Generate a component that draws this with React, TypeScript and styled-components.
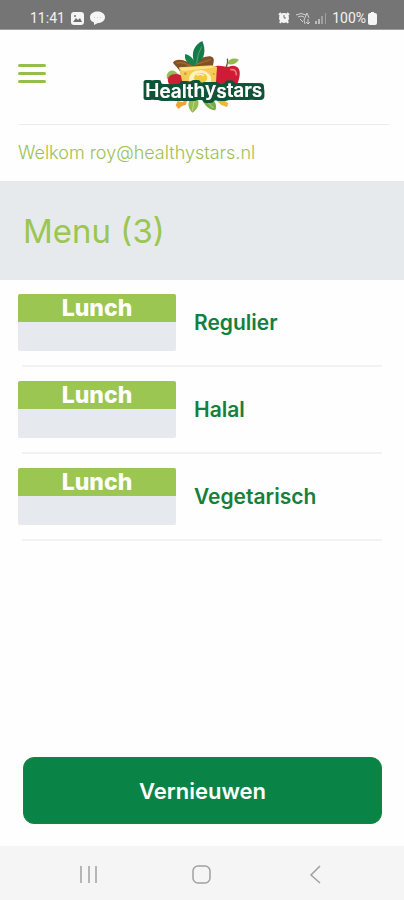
import React from "react";
import styled, { createGlobalStyle } from "styled-components";

const GlobalStyle = createGlobalStyle`
  * { box-sizing: border-box; }
  body {
    margin: 0;
    background: #fefefe;
    font-family: Inter, "Liberation Sans", sans-serif;
  }
  h1, p, ul { margin: 0; padding: 0; }
`;

const Screen = styled.div`
  display: flex;
  flex-direction: column;
  min-height: 100vh;
`;

const StatusBar = styled.div`
  display: flex;
  justify-content: space-between;
  align-items: center;
  height: 30px;
  padding: 7px 27px 0 30px;
  background: #757575;
  border-bottom: 1px solid #9c9c9c;
  color: #f2f2f2;
  font: 400 14px/20px Roboto, sans-serif;
`;

const StatusGroup = styled.div<{ $gap: number }>`
  display: flex;
  align-items: center;
  gap: ${(p) => p.$gap}px;
`;

const Battery = styled.span`
  display: flex;
  align-items: center;
  gap: 2px;
`;

const Header = styled.header`
  display: grid;
  grid-template-columns: 28px 1fr 28px;
  align-items: center;
  height: 95px;
  margin: 0 14px 0 18px;
  border-bottom: 1px solid #ececec;
`;

const MenuButton = styled.button`
  display: flex;
  flex-direction: column;
  gap: 5px;
  padding: 0;
  margin-bottom: 8px;
  border: 0;
  background: none;
`;

const Bar = styled.span`
  height: 3px;
  width: 28px;
  border-radius: 2px;
  background: #94be4c;
`;

const Logo = styled.svg`
  justify-self: center;
  display: block;
`;

const Welcome = styled.p`
  padding: 16px 18px;
  color: #9dc154;
  font-size: 18px;
  font-weight: 300;
  line-height: 24px;
`;

const Banner = styled.h1`
  padding: 30px 23px 29px;
  background: #e6eaed;
  color: #9bc651;
  font-size: 33px;
  font-weight: 400;
  line-height: 40px;
`;

const List = styled.ul`
  flex: 1;
  list-style: none;
`;

const Row = styled.li`
  display: flex;
  align-items: center;
  gap: 18px;
  padding: 14px 22px 16px 18px;
  background: linear-gradient(#f1f2f3, #f1f2f3) 22px 100% / calc(100% - 44px) 2px no-repeat;
`;

const Tile = styled.div`
  width: 158px;
  height: 57px;
  flex: none;
  border-radius: 2px;
  overflow: hidden;
  background: #e6e9ed;
`;

const TileTitle = styled.div`
  height: 28px;
  background: #9bc651;
  color: #fff;
  font-size: 23px;
  font-weight: 800;
  line-height: 28px;
  text-align: center;
`;

const RowName = styled.span`
  color: #14803c;
  font-size: 21px;
  font-weight: 600;
  line-height: 28px;
`;

const Refresh = styled.button`
  margin: 0 22px 22px 23px;
  height: 67px;
  border: 1px solid #17843a;
  border-radius: 11px;
  background: #0a8446;
  color: #fff;
  font: 600 22px/28px Inter, sans-serif;
`;

const NavStrip = styled.div`
  background: #f5f5f5;
`;

const NavBar = styled.nav`
  display: grid;
  grid-template-columns: repeat(3, 1fr);
  width: 84%;
  height: 54px;
  padding-top: 3px;
  margin: 0 auto;
`;

const NavButton = styled.button`
  display: grid;
  place-items: center;
  padding: 0;
  border: 0;
  background: none;
  color: #a0a0a0;
`;

const meals = ["Regulier", "Halal", "Vegetarisch"];

function Brand() {
  return (
    <Logo width="122" height="76" viewBox="36 12 366 228" role="img" aria-label="Healthystars">
      <defs>
        <filter id="outline" x="-10%" y="-40%" width="120%" height="180%">
          <feMorphology in="SourceAlpha" operator="dilate" radius="9" result="grown" />
          <feGaussianBlur in="grown" stdDeviation="3" result="soft" />
          <feComponentTransfer in="soft" result="edge">
            <feFuncA type="linear" slope="3" intercept="-1" />
          </feComponentTransfer>
          <feFlood floodColor="#075537" />
          <feComposite in2="edge" operator="in" result="border" />
          <feMerge>
            <feMergeNode in="border" />
            <feMergeNode in="SourceGraphic" />
          </feMerge>
        </filter>
      </defs>
      <path d="M108 132C103 112 119 100 134 110L153 128Z" fill="#92bd58" />
      <path d="M112 143C103 119 137 108 159 126L160 169H125Z" fill="#ce2034" />
      <path d="M126 83C132 70 157 74 168 80C188 86 204 68 224 65C241 60 251 67 248 80L244 101L151 122C147 101 134 95 126 83Z" fill="#805029" />
      <path d="M137 84Q158 80 174 91Q203 88 239 73" fill="none" stroke="#a06a33" strokeWidth="4" />
      <path d="M249 97C263 86 282 98 293 95C315 87 329 99 326 120C324 144 314 158 299 161H247Z" fill="#cf1b35" />
      <path d="M300 104Q316 102 316 119" fill="none" stroke="#f27a72" strokeWidth="5" strokeLinecap="round" />
      <path d="M284 99Q292 84 289 71" fill="none" stroke="#71522e" strokeWidth="4" />
      <path d="M289 87C294 70 310 67 324 74C314 87 303 91 289 87Z" fill="#91b94c" />
      <path d="M144 97L242 91L258 96L253 169H160Z" fill="#f6cb55" />
      <path d="M145 98L246 93L249 98L154 108Z" fill="#ffe48a" />
      <path d="M174 135C174 107 206 101 225 110C242 118 246 140 235 155H178Z" fill="#fff3bd" />
      <ellipse cx="209" cy="129" rx="20" ry="15" fill="#f4c93e" />
      <path d="M197 121Q207 114 219 122" fill="none" stroke="#fff5c5" strokeWidth="4" />
      <circle cx="163" cy="116" r="4" fill="#d59b31" />
      <circle cx="248" cy="117" r="3" fill="#d59b31" />
      <path d="M190 83C178 52 191 29 214 18C225 45 222 69 201 84Z" fill="#157a49" />
      <path d="M197 84Q199 57 212 35" fill="none" stroke="#56a470" strokeWidth="3" />
      <path d="M190 93C168 87 158 72 163 57C181 62 192 76 193 91Z" fill="#17804b" />
      <path d="M177 193C168 209 173 222 184 233C200 223 205 211 201 192Z" fill="#91bd51" />
      <path d="M213 191C220 211 233 224 253 226C260 208 250 194 234 186Z" fill="#78ae47" />
      <path d="M184 227L190 196M247 219L225 196" stroke="#c8d987" strokeWidth="3" />
      <path d="M134 211L140 198L154 202L169 191L165 209L153 213L142 222Z" fill="#f2a432" />
      <path d="M259 199L271 210L288 216L292 205L276 194Z" fill="#f2b33b" />
      <text
        x="43"
        y="187 189 190 188 189 185 184 188 187 187 186 186"
        fill="#ffffff"
        filter="url(#outline)"
        fontFamily="Inter, sans-serif"
        fontSize="57"
        fontWeight="600"
      >
        Healthystars
      </text>
    </Logo>
  );
}

export default function App() {
  return (
    <Screen>
      <GlobalStyle />
      <StatusBar>
        <StatusGroup $gap={6}>
          <span>11:41</span>
          <svg width="13" height="13" viewBox="0 0 13 13">
            <rect width="13" height="13" rx="3" fill="#f5f5f5" />
            <path d="M2 10L5 6L7 8L9 6L11 10Z" fill="#707070" />
            <circle cx="4" cy="4" r="1" fill="#707070" />
          </svg>
          <svg width="15" height="14" viewBox="0 0 15 14">
            <path d="M7.500 0.500C12 0.500 15 3 15 6.200S12 12 8 12L4 14V11.500C1 10.500 0 8.500 0 6.200C0 3 3 0.500 7.500 0.500Z" fill="#f5f5f5" />
            <path d="M4 6.500H11" stroke="#ccc" strokeDasharray="1 2" />
          </svg>
        </StatusGroup>
        <StatusGroup $gap={5}>
          <svg width="12" height="12" viewBox="0 0 12 12">
            <path d="M1 3L3 1M11 3L9 1M2 11L3 9M10 11L9 9" stroke="#f5f5f5" strokeWidth="2" />
            <circle cx="6" cy="6" r="5" fill="#f5f5f5" />
            <path d="M6 3V6H8" fill="none" stroke="#707070" />
          </svg>
          <svg width="15" height="13" viewBox="0 0 15 13" fill="none" stroke="#d0d0d0">
            <path d="M1 3Q6 0 11 3M3 5Q6 3 9 5M5 7L8 10M9 8L12 1L14 6M9 8L10 12M13 7V12M11 10L13 12L15 10" />
          </svg>
          <svg width="12" height="12" viewBox="0 0 12 12" fill="#bcbcbc">
            <path d="M0 9H2V12H0ZM3 7H5V12H3Z" />
            <path d="M6 4H8V12H6ZM10 1H11V12H10Z" fill="#a0a0a0" />
          </svg>
          <Battery>
            <span>100%</span>
            <svg width="9" height="13" viewBox="0 0 9 13">
              <path d="M3 0H6V1H7Q9 1 9 3V11Q9 13 7 13H2Q0 13 0 11V3Q0 1 2 1H3Z" fill="#f5f5f5" />
            </svg>
          </Battery>
        </StatusGroup>
      </StatusBar>
      <Header>
        <MenuButton aria-label="Menu">
          <Bar /><Bar /><Bar />
        </MenuButton>
        <Brand />
      </Header>
      <Welcome>Welkom roy@healthystars.nl</Welcome>
      <Banner>Menu (3)</Banner>
      <List>
        {meals.map((meal) => (
          <Row key={meal}>
            <Tile><TileTitle>Lunch</TileTitle></Tile>
            <RowName>{meal}</RowName>
          </Row>
        ))}
      </List>
      <Refresh>Vernieuwen</Refresh>
      <NavStrip>
        <NavBar>
          <NavButton aria-label="Recente apps">
            <svg width="20" height="20" viewBox="0 0 20 20" stroke="#b5b5b5" strokeWidth="2">
              <path d="M2 1V18M10 1V18M17 1V18" />
            </svg>
          </NavButton>
          <NavButton aria-label="Startscherm">
            <svg width="20" height="20" viewBox="0 0 20 20" fill="none" stroke="currentColor" strokeWidth="1.500">
              <rect x="1" y="1" width="17" height="17" rx="5" />
            </svg>
          </NavButton>
          <NavButton aria-label="Terug">
            <svg width="20" height="20" viewBox="0 0 20 20" fill="none" stroke="currentColor" strokeWidth="1.500">
              <path d="M15 1L6 10L15 18" />
            </svg>
          </NavButton>
        </NavBar>
      </NavStrip>
    </Screen>
  );
}
